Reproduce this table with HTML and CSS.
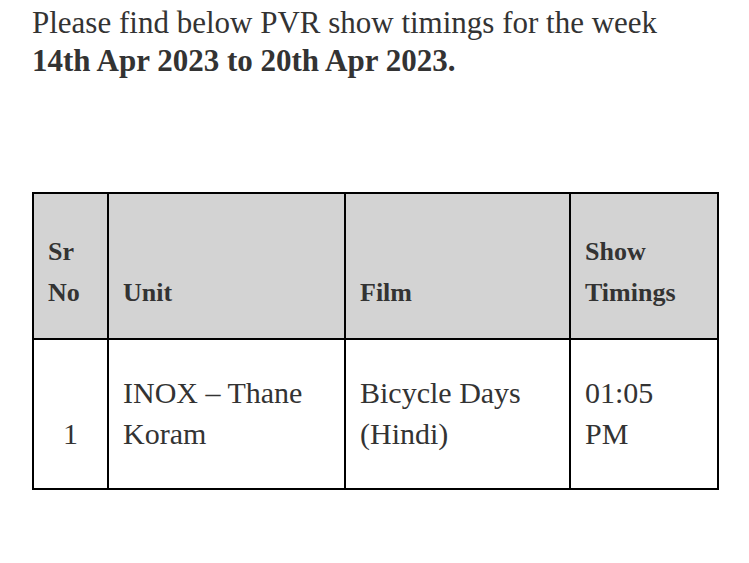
FILE: index.html
```html
<!DOCTYPE html>
<html>
<head>
<meta charset="utf-8">
<link rel="stylesheet" href="styles.css">
</head>
<body>
<div class="page">
  <p class="intro">Please find below PVR show timings for the week<br><strong>14th Apr 2023 to 20th Apr 2023.</strong></p>
  <table class="timings">
    <colgroup>
      <col class="c1"><col class="c2"><col class="c3"><col class="c4">
    </colgroup>
    <thead>
      <tr class="head-row">
        <th>Sr<br>No</th>
        <th>Unit</th>
        <th>Film</th>
        <th>Show<br>Timings</th>
      </tr>
    </thead>
    <tbody>
      <tr class="body-row">
        <td class="num">1</td>
        <td>INOX – Thane<br>Koram</td>
        <td>Bicycle Days<br>(Hindi)</td>
        <td>01:05<br>PM</td>
      </tr>
    </tbody>
  </table>
</div>
</body>
</html>
```
FILE: styles.css
```css
html, body {
  margin: 0;
  padding: 0;
  background: #ffffff;
}
.page {
  padding: 4px 0 0 32px;
  font-family: "Liberation Serif", "Times New Roman", serif;
  color: #333333;
}
.intro {
  margin: 0;
  font-size: 31px;
  line-height: 38px;
}
.intro strong {
  font-weight: bold;
}
.timings {
  margin-top: 112px;
  border-collapse: collapse;
  table-layout: fixed;
  width: 685px;
}
.c1 { width: 75px; }
.c2 { width: 237px; }
.c3 { width: 225px; }
.c4 { width: 148px; }
.timings th,
.timings td {
  border: 2px solid #000000;
  text-align: left;
  vertical-align: bottom;
  padding: 0 10px 0 14px;
}
.head-row th {
  background: #d3d3d3;
  font-size: 26px;
  font-weight: bold;
  line-height: 41px;
  height: 146px;
  padding-bottom: 25px;
  box-sizing: border-box;
}
.body-row td {
  font-size: 30px;
  font-weight: normal;
  line-height: 41px;
  height: 150px;
  padding-bottom: 34px;
  box-sizing: border-box;
}
.body-row td.num {
  text-align: center;
  padding-left: 10px;
}
```
